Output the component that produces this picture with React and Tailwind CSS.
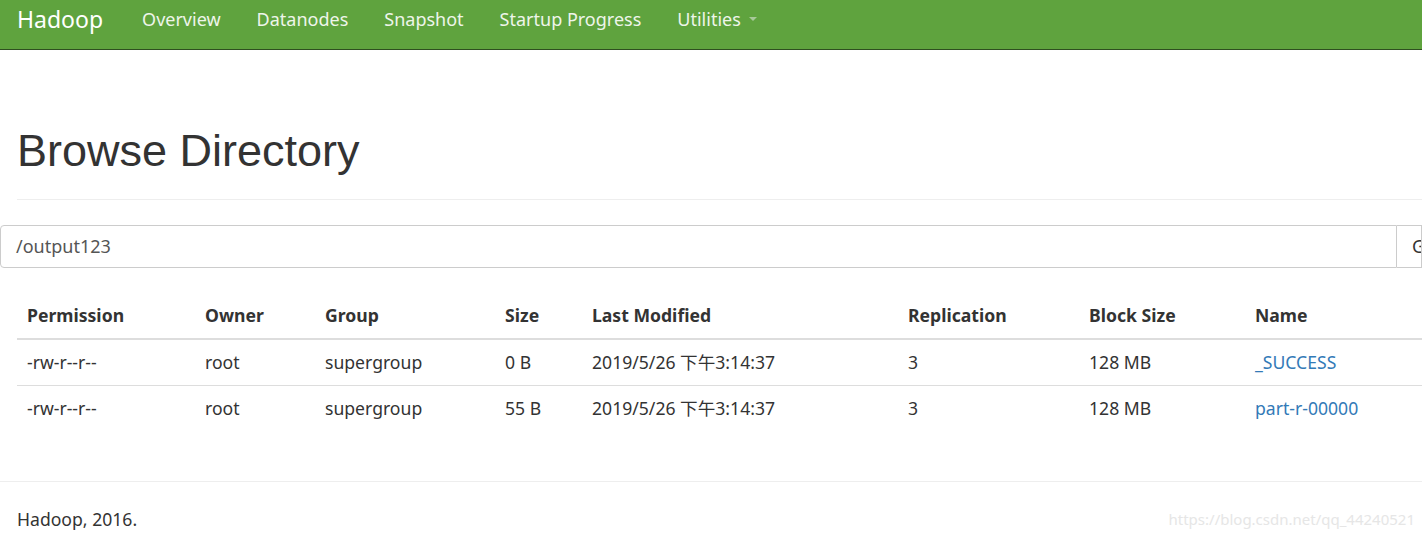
const rows = [
  { perm: '-rw-r--r--', owner: 'root', group: 'supergroup', size: '0 B', modified: '2019/5/26 下午3:14:37', repl: '3', block: '128 MB', name: '_SUCCESS' },
  { perm: '-rw-r--r--', owner: 'root', group: 'supergroup', size: '55 B', modified: '2019/5/26 下午3:14:37', repl: '3', block: '128 MB', name: 'part-r-00000' },
];

const cols = [
  { label: 'Permission', w: 'w-[178px]' },
  { label: 'Owner', w: 'w-[120px]' },
  { label: 'Group', w: 'w-[180px]' },
  { label: 'Size', w: 'w-[87px]' },
  { label: 'Last Modified', w: 'w-[316px]' },
  { label: 'Replication', w: 'w-[181px]' },
  { label: 'Block Size', w: 'w-[166px]' },
  { label: 'Name', w: 'w-[200px]' },
];

const App = () => {
  return (
    <div className="min-h-screen bg-white overflow-hidden text-[#333] font-['Noto_Sans','Noto_Sans_CJK_SC',sans-serif]">
      <nav className="h-[50px] bg-[#5fa33e] border-b border-[#2f4f20] flex items-start">
        <div className="h-[38px] flex items-center gap-9 pl-[17px]">
          <span className="text-[23px] text-white mr-[3px]">Hadoop</span>
          {['Overview', 'Datanodes', 'Snapshot', 'Startup Progress'].map((item) => (
            <span key={item} className="text-[18px] text-[#eef5ea]">{item}</span>
          ))}
          <span className="flex items-center gap-[8px] text-[18px] text-[#eef5ea]">
            Utilities
            <span className="w-0 h-0 border-l-[4px] border-r-[4px] border-t-[4px] border-l-transparent border-r-transparent border-t-[#a8c99a]"></span>
          </span>
        </div>
      </nav>

      <div className="pl-[17px] pt-[71px]">
        <h1 className="font-['Liberation_Sans',sans-serif] text-[45px] leading-[60px] text-[#333] pb-[18px] border-b border-[#eee]">
          Browse Directory
        </h1>
      </div>

      <div className="mt-[25px] flex h-[43px]">
        <div className="flex-1 border border-[#ccc] rounded-l-[4px] flex items-center pl-[15px] text-[18px] text-[#555]">
          /output123
        </div>
        <div className="w-[25px] border border-l-0 border-[#ccc] bg-[#fff] flex items-center pl-[15px] text-[18px] text-[#333] overflow-hidden">
          Go!
        </div>
      </div>

      <div className="pl-[17px] mt-[25px]">
        <table className="border-collapse text-[17.6px] table-fixed w-[1428px]">
          <thead>
            <tr className="border-b-2 border-[#ddd]">
              {cols.map((c) => (
                <th key={c.label} className={`${c.w} h-[46px] text-left font-bold pl-[10px] align-middle`}>{c.label}</th>
              ))}
            </tr>
          </thead>
          <tbody>
            {rows.map((r) => (
              <tr key={r.name} className="border-b border-[#ddd] last:border-b-0">
                <td className="h-[46px] pl-[10px]">{r.perm}</td>
                <td className="pl-[10px]">{r.owner}</td>
                <td className="pl-[10px]">{r.group}</td>
                <td className="pl-[10px]">{r.size}</td>
                <td className="pl-[10px]">{r.modified}</td>
                <td className="pl-[10px]">{r.repl}</td>
                <td className="pl-[10px]">{r.block}</td>
                <td className="pl-[10px] text-[#337ab7]">{r.name}</td>
              </tr>
            ))}
          </tbody>
        </table>
      </div>

      <div className="mt-[50px] border-t border-[#eee] pl-[17px] pt-[24px] flex justify-between items-center">
        <span className="text-[17.6px]">Hadoop, 2016.</span>
        <span className="text-[15px] text-[#e6e6e6] pr-[7px]">https://blog.csdn.net/qq_44240521</span>
      </div>
    </div>
  );
};

export default App;
